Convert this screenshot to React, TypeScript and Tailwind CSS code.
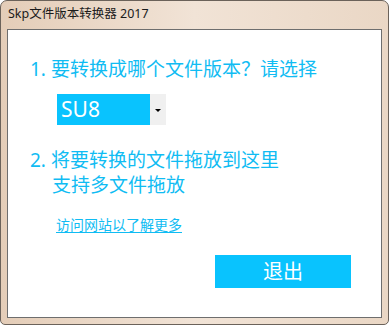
import React from "react";

const cjk = { fontFamily: '"Noto Sans", "Noto Sans CJK SC", sans-serif' };

export default function App() {
  return (
    <div className="w-[390px] h-[326px] bg-white" style={cjk}>
      {/* Window frame */}
      <div className="w-[389px] h-[325px] flex flex-col rounded-t-[7px] rounded-b-[5px] border border-[#6b625a] bg-gradient-to-r from-[#e4cdb8] via-[#f1e3d6] to-[#ead7c5] px-[6px] pb-[6px]">
        {/* Title bar */}
        <div className="h-[28px] flex items-center pl-[1px] pb-[2px] text-[12.5px] text-[#1b1b1b] leading-none">
          Skp文件版本转换器 2017
        </div>

        {/* Client area */}
        <div className="flex-1 bg-white border border-[#6e6e6e] flex flex-col pl-[22px] pt-[27px]">
          <div className="text-[19px] leading-[25px] text-[#10bcf3]">
            1. 要转换成哪个文件版本？请选择
          </div>

          {/* Version select */}
          <div className="ml-[27px] mt-[12px] flex h-[31px] w-[109px]">
            <div className="w-[93px] bg-[#09c3fe] text-white text-[21px] leading-[31px] pl-[4px]">
              SU8
            </div>
            <div className="flex-1 bg-[#f0f0f0] flex items-center justify-center pt-[2px]">
              <div className="w-0 h-0 border-l-[3px] border-r-[3px] border-t-[3px] border-l-transparent border-r-transparent border-t-black" />
            </div>
          </div>

          <div className="mt-[23px] text-[19px] leading-[25px] text-[#10bcf3]">
            <div>2. 将要转换的文件拖放到这里</div>
            <div className="pl-[22px]">支持多文件拖放</div>
          </div>

          <a className="ml-[26px] mt-[19px] w-fit text-[14px] leading-[16px] text-[#10bcf3] underline underline-offset-2">
            访问网站以了解更多
          </a>

          <div className="flex justify-end pr-[30px] mt-[22px]">
            <button className="w-[136px] h-[33px] bg-[#09c3fe] text-white text-[20px] leading-none">
              退出
            </button>
          </div>
        </div>
      </div>
    </div>
  );
}
